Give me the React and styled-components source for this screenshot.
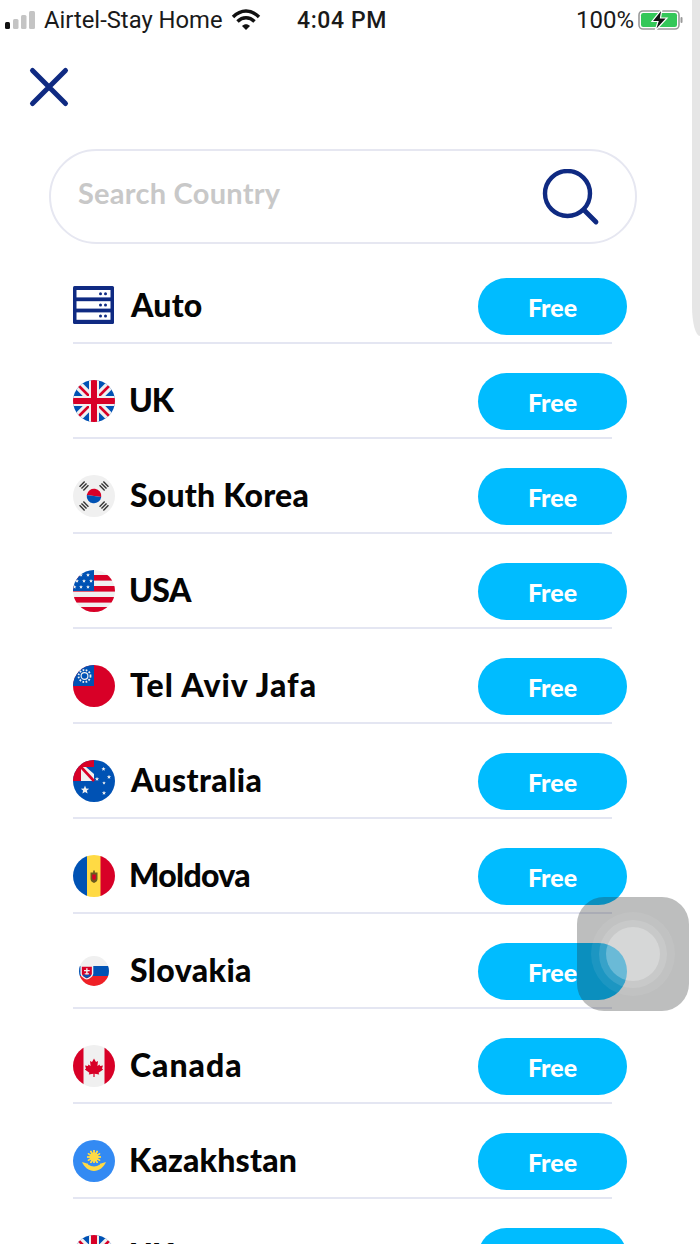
import React from 'react';
import styled, { createGlobalStyle } from 'styled-components';

const NAVY = '#0f2a82';

const Global = createGlobalStyle`
  html, body { margin: 0; padding: 0; background: #fff; }
`;

const Screen = styled.div`
  position: relative;
  width: 700px;
  height: 1244px;
  overflow: hidden;
  background: #fff;
  font-family: Lato, "Liberation Sans", sans-serif;
`;

const EdgeStrip = styled.div`
  position: absolute;
  top: 0;
  right: 0;
  width: 8px;
  height: 336px;
  background: #e6e6e6;
  border-bottom-left-radius: 8px 30px;
`;

const StatusBar = styled.div`
  height: 40px;
  display: flex;
  align-items: center;
  font-family: Roboto, "Liberation Sans", sans-serif;
  color: #1a1a1a;
`;

const Signal = styled.svg`
  width: 36px;
  height: 20px;
  margin-left: 3px;
  flex: none;
`;

const Carrier = styled.span`
  margin-left: 5px;
  width: 187px;
  font-size: 23.8px;
  white-space: nowrap;
`;

const Wifi = styled.svg`
  width: 30px;
  height: 22px;
  flex: none;
`;

const Clock = styled.span`
  margin-left: 36px;
  width: 279px;
  font-weight: 500;
  font-size: 23px;
  letter-spacing: 0.6px;
`;

const Percent = styled.span`
  font-size: 24px;
  width: 62px;
`;

const Battery = styled.svg`
  width: 46px;
  height: 22px;
  flex: none;
`;

const CloseBtn = styled.div`
  margin: 26px 0 0 28px;
  width: 42px;
  height: 42px;
`;

const SearchBox = styled.div`
  box-sizing: border-box;
  margin: 41px 0 0 49px;
  width: 588px;
  height: 95px;
  border: 2px solid #e6e7f1;
  border-radius: 48px;
  display: flex;
  align-items: center;
  justify-content: space-between;
  padding: 0 33px 0 27px;
`;

const Placeholder = styled.span`
  color: #c8c8c8;
  font-size: 29px;
  font-weight: 700;
  letter-spacing: 0.25px;
  white-space: nowrap;
  margin-bottom: 8px;
`;

const SearchIcon = styled.svg`
  width: 60px;
  height: 62px;
  margin-top: 6px;
  flex: none;
`;

const List = styled.div`
  margin: 5px 0 0 73px;
  width: 539px;
`;

const Row = styled.div`
  height: 95px;
  box-sizing: border-box;
  padding-top: 18px;
  border-bottom: 2px solid #e4e6f2;
  display: flex;
  align-items: center;
`;

const FlagSlot = styled.div`
  width: 42px;
  height: 42px;
  display: flex;
  align-items: center;
  justify-content: center;
  flex: none;
  margin-top: 2px;
`;

const FlagSvg = styled.svg`
  width: ${(p) => p.$size}px;
  height: ${(p) => p.$size}px;
  border-radius: ${(p) => (p.$square ? '0' : '50%')};
  display: block;
`;

const Name = styled.span`
  margin-left: ${(p) => p.$gap}px;
  flex: 1;
  color: #050505;
  font-size: 32px;
  font-weight: 900;
  letter-spacing: ${(p) => p.$track}px;
  white-space: nowrap;
`;

const FreeBtn = styled.div`
  width: 149px;
  height: 57px;
  flex: none;
  margin-right: -15px;
  margin-top: 4px;
  border-radius: 29px;
  background: #00bcff;
  color: #fff;
  font-size: 25px;
  font-weight: 900;
  display: flex;
  align-items: center;
  justify-content: center;
`;

const Assistive = styled.div`
  position: absolute;
  left: 577px;
  top: 897px;
  width: 112px;
  height: 114px;
  border-radius: 27px;
  background: rgba(37, 40, 40, 0.3);
  display: flex;
  align-items: center;
  justify-content: center;
`;

const Ring = styled.div`
  width: ${(p) => p.$d}px;
  height: ${(p) => p.$d}px;
  border-radius: 50%;
  background: ${(p) => p.$bg};
  display: flex;
  align-items: center;
  justify-content: center;
`;

const Flag = ({ children, size = 42 }) => (
  <FlagSvg $size={size} viewBox="0 0 42 42">{children}</FlagSvg>
);

const UnionLines = () => (
  <>
    <rect width="42" height="42" fill="#0052b4" />
    <path d="M0 0L42 42M42 0L0 42" stroke="#f0f0f0" strokeWidth="9" />
    <path d="M3 3L17 17M25 25L39 39M39 3L25 17M17 25L3 39" stroke="#d80027" strokeWidth="2.6" />
    <path d="M21 0V42M0 21H42" stroke="#f0f0f0" strokeWidth="10" />
    <path d="M21 0V42M0 21H42" stroke="#d80027" strokeWidth="6" />
  </>
);

const Star = ({ x, y, r = 1.6, fill = '#f0f0f0' }) => (
  <polygon
    fill={fill}
    points={[0, 1, 2, 3, 4, 5, 6, 7, 8, 9]
      .map((i) => {
        const rad = i % 2 ? r * 0.45 : r;
        const a = (Math.PI / 5) * i - Math.PI / 2;
        return `${(x + rad * Math.cos(a)).toFixed(2)},${(y + rad * Math.sin(a)).toFixed(2)}`;
      })
      .join(' ')}
  />
);

const ServerIcon = () => (
  <FlagSvg $size={42} $square viewBox="0 0 42 42">
    <rect x="0" y="1" width="41" height="38" rx="1.5" fill={NAVY} />
    {[5, 16.2, 27.4].map((y) => (
      <g key={y}>
        <rect x="3.5" y={y} width="34" height="7.4" fill="#fff" />
        <circle cx="27.5" cy={y + 3.7} r="1.5" fill={NAVY} />
        <circle cx="32.5" cy={y + 3.7} r="1.5" fill={NAVY} />
      </g>
    ))}
  </FlagSvg>
);

const UK = () => <Flag><UnionLines /></Flag>;

const Korea = () => (
  <Flag>
    <rect width="42" height="42" fill="#f0f0f0" />
    <g transform="rotate(8 21 21)">
      <path d="M13.7 21a7.3 7.3 0 0 1 14.6 0Z" fill="#d80027" />
      <path d="M13.7 21a7.3 7.3 0 0 0 14.6 0Z" fill="#0052b4" />
    </g>
    {[[11, 11, -45], [31, 11, 45], [11, 31, 45], [31, 31, -45]].map(([x, y, a]) => (
      <g key={`${x}-${y}`} transform={`rotate(${a} ${x} ${y})`} fill="#333">
        <rect x={x - 3.6} y={y - 3.4} width="7.2" height="1.4" />
        <rect x={x - 3.6} y={y - 0.7} width="7.2" height="1.4" />
        <rect x={x - 3.6} y={y + 2} width="7.2" height="1.4" />
      </g>
    ))}
  </Flag>
);

const USA = () => (
  <Flag>
    <rect width="42" height="42" fill="#f0f0f0" />
    {[5, 16, 27, 37].map((y) => (
      <rect key={y} y={y} width="42" height={y === 37 ? 5 : 5.6} fill="#d80027" />
    ))}
    <rect width="21" height="21" fill="#0052b4" />
    {[[8, 5], [15, 5], [4, 11], [11, 11], [18, 11], [8, 17], [15, 17], [1.5, 17]].map(([x, y]) => (
      <Star key={`${x}-${y}`} x={x} y={y} r={2} />
    ))}
  </Flag>
);

const Taiwan = () => (
  <Flag>
    <rect width="42" height="42" fill="#d80027" />
    <rect width="21" height="21" fill="#0052b4" />
    <circle cx="11.5" cy="11" r="3.4" fill="none" stroke="#f0f0f0" strokeWidth="1.2" />
    <circle cx="11.5" cy="11" r="6" fill="none" stroke="#f0f0f0" strokeWidth="1.8" strokeDasharray="1.7 1.5" />
  </Flag>
);

const Australia = () => (
  <Flag>
    <rect width="42" height="42" fill="#0052b4" />
    <rect width="21" height="21" fill="#d80027" />
    <path d="M8 7H21V21H8Z" fill="#f0f0f0" />
    <path d="M8 7L21 21" stroke="#d80027" strokeWidth="2.6" />
    <path d="M13 7H21V14Z" fill="#0052b4" />
    <Star x={12} y={30} r={4.4} />
    <Star x={30.5} y={9} r={2.2} />
    <Star x={24} y={19} r={2.2} />
    <Star x={36} y={17} r={2.2} />
    <Star x={31} y={23} r={1.8} />
    <Star x={31} y={33} r={2.2} />
  </Flag>
);

const Moldova = () => (
  <Flag>
    <rect width="14.5" height="42" fill="#0052b4" />
    <rect x="14" width="14" height="42" fill="#ffda44" />
    <rect x="27.5" width="14.5" height="42" fill="#d80027" />
    <path d="M17.5 17.5H24.5V24C24.5 26 23 27 21 28C19 27 17.5 26 17.5 24Z" fill="#6b5a1e" />
    <path d="M19.2 19.5H22.8V23.5L21 25.5L19.2 23.5Z" fill="#d80027" />
    <rect x="20.2" y="15.5" width="1.6" height="3" fill="#6b5a1e" />
  </Flag>
);

const Slovakia = () => (
  <Flag size={30}>
    <rect width="42" height="42" fill="#f0f0f0" />
    <rect y="14" width="42" height="14" fill="#0052b4" />
    <rect y="28" width="42" height="14" fill="#ef2026" />
    <path d="M2 13H20V24C20 29 14 32 11 33C8 32 2 29 2 24Z" fill="#f0f0f0" />
    <path d="M4 15H18V24C18 27.5 14 30 11 31C8 30 4 27.5 4 24Z" fill="#d80027" />
    <path d="M10 17H12V19.5H15V21.5H12V24H14V26H8V24H10V21.5H7V19.5H10Z" fill="#f0f0f0" />
    <path d="M5 27C7 25 9 26 11 27C13 26 15 25 17 27C15 29.5 13 30 11 31C9 30 7 29.5 5 27Z" fill="#0052b4" />
  </Flag>
);

const Canada = () => (
  <Flag>
    <rect width="42" height="42" fill="#f0f0f0" />
    <rect width="10.5" height="42" fill="#d80027" />
    <rect x="31.5" width="10.5" height="42" fill="#d80027" />
    <path
      d="M21 13.5L23 17L25 16L24.4 21L26.6 19.4L27 21L30 20.6L29 23.6L30.2 24.4L25.6 27.8L26.2 29.4L21.6 28.8V32H20.4V28.8L15.8 29.4L16.4 27.8L11.8 24.4L13 23.6L12 20.6L15 21L15.4 19.4L17.6 21L17 16L19 17Z"
      fill="#d80027"
    />
  </Flag>
);

const Kazakhstan = () => (
  <Flag>
    <rect width="42" height="42" fill="#338af3" />
    {Array.from({ length: 12 }).map((_, i) => (
      <rect key={i} x="20.3" y="10" width="1.4" height="14" fill="#ffda44" transform={`rotate(${i * 30} 21 17)`} />
    ))}
    <circle cx="21" cy="17" r="4.6" fill="#ffda44" />
    <path d="M9 22L14 23.5C17 24.5 19 24.5 21 25C23 24.5 25 24.5 28 23.5L33 22C31 27 26 31 21 31C16 31 11 27 9 22Z" fill="#ffda44" />
    <path d="M15 24.5C19 27 23 27 27 24.5V23H15Z" fill="#338af3" />
  </Flag>
);

const rows = [
  ['Auto', ServerIcon, 16, 0.2],
  ['UK', UK, 14, -1],
  ['South Korea', Korea, 15, 0.2],
  ['USA', USA, 14, -0.5],
  ['Tel Aviv Jafa', Taiwan, 15, 1],
  ['Australia', Australia, 16, 0.4],
  ['Moldova', Moldova, 14, -0.7],
  ['Slovakia', Slovakia, 15, 0.4],
  ['Canada', Canada, 15, 1],
  ['Kazakhstan', Kazakhstan, 14, 0.2],
  ['UK', UK, 14, -1],
];

export default function App() {
  return (
    <Screen>
      <Global />
      <EdgeStrip />
      <StatusBar>
        <Signal viewBox="0 0 36 20">
          <rect x="2" y="12" width="5" height="7" rx="1.5" fill="#111" />
          <rect x="10" y="9" width="5.5" height="10" rx="1.5" fill="#c4c4c4" />
          <rect x="18" y="5" width="5.5" height="14" rx="1.5" fill="#c4c4c4" />
          <rect x="26" y="1" width="6" height="18" rx="1.5" fill="#c4c4c4" />
        </Signal>
        <Carrier>Airtel-Stay Home</Carrier>
        <Wifi viewBox="0 0 30 22">
          <path d="M2 8C10 0 20 0 28 8" fill="none" stroke="#111" strokeWidth="3.4" />
          <path d="M6.5 12.5C11.5 7.5 18.5 7.5 23.5 12.5" fill="none" stroke="#111" strokeWidth="3.4" />
          <path d="M11 17C13.5 14.5 16.5 14.5 19 17L15 21Z" fill="#111" />
        </Wifi>
        <Clock>4:04 PM</Clock>
        <Percent>100%</Percent>
        <Battery viewBox="0 0 46 22">
          <rect x="1" y="2" width="40" height="18" rx="4" fill="none" stroke="#9a9a9a" strokeWidth="1.6" />
          <rect x="3" y="4" width="36" height="14" rx="2.2" fill="#34c759" />
          <rect x="42.5" y="8" width="2" height="6" rx="1" fill="#9a9a9a" />
          <path d="M24 0L14 12.5H20L17 22L29 9H22.5Z" fill="#111" stroke="#fff" strokeWidth="1.2" />
        </Battery>
      </StatusBar>
      <CloseBtn>
        <svg width="42" height="42" viewBox="0 0 42 42">
          <path d="M4.5 4.5L37.5 37.5M37.5 4.5L4.5 37.5" stroke={NAVY} strokeWidth="5" strokeLinecap="round" />
        </svg>
      </CloseBtn>
      <SearchBox>
        <Placeholder>Search Country</Placeholder>
        <SearchIcon viewBox="0 0 60 62">
          <circle cx="25.5" cy="24.5" r="22.5" fill="none" stroke={NAVY} strokeWidth="4.4" />
          <path d="M42 41L54 53" stroke={NAVY} strokeWidth="4.8" strokeLinecap="round" />
        </SearchIcon>
      </SearchBox>
      <List>
        {rows.map(([name, Icon, gap, track], i) => (
          <Row key={i}>
            <FlagSlot><Icon /></FlagSlot>
            <Name $gap={gap} $track={track}>{name}</Name>
            <FreeBtn>Free</FreeBtn>
          </Row>
        ))}
      </List>
      <Assistive>
        <Ring $d={84} $bg="rgba(255,255,255,0.07)">
          <Ring $d={68} $bg="rgba(255,255,255,0.12)">
            <Ring $d={54} $bg="rgba(255,255,255,0.26)" />
          </Ring>
        </Ring>
      </Assistive>
    </Screen>
  );
}
